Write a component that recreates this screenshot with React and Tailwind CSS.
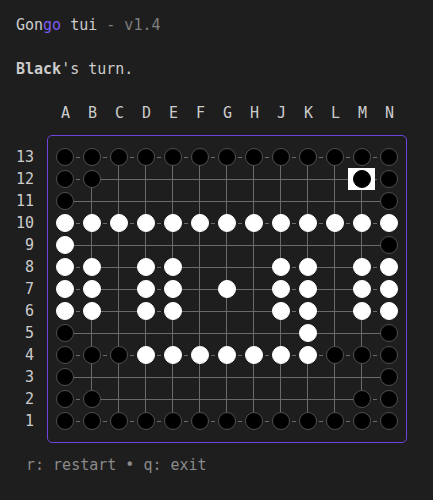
import React from "react";

// board rows from 13 (top) to 1 (bottom); B = black, W = white, . = empty
const board = [
  "BBBBBBBBBBBBB",
  "BB.........BB",
  "B...........B",
  "WWWWWWWWWWWWW",
  "W...........B",
  "WW.WW...WW.WW",
  "WW.WW.W.WW.WW",
  "WW.WW...WW.WW",
  "B........W..B",
  "BBBWWWWWWWBBB",
  "B...........B",
  "BB.........BB",
  "BBBBBBBBBBBBB",
];

const letters = ["A", "B", "C", "D", "E", "F", "G", "H", "J", "K", "L", "M", "N"];
const cursor = { r: 1, c: 11 };

const isStone = (v) => v === "B" || v === "W";

// one intersection: a 3x3 grid (arm / line / arm) with the stone on top
function Cell({ r, c }) {
  const v = board[r][c];
  const cur = r === cursor.r && c === cursor.c;
  const here = isStone(v);
  const left = c > 0 ? board[r][c - 1] : null;
  const right = c < 12 ? board[r][c + 1] : null;
  const up = r > 0 ? board[r - 1][c] : null;
  const down = r < 12 ? board[r + 1][c] : null;

  const leftDash = left !== null && here && isStone(left);
  const rightDash = right !== null && here && isStone(right);
  const upLine = up !== null && !(here && isStone(up));
  const downLine = down !== null && !(here && isStone(down));
  const leftLine = left !== null && !leftDash;
  const rightLine = right !== null && !rightDash;
  const center = upLine || downLine || leftLine || rightLine;

  return (
    <div
      className={`grid h-[22px] w-[27px] grid-cols-[13px_1px_13px] grid-rows-[11px_1px_10px] ${
        cur ? "bg-white" : ""
      }`}
    >
      {!cur && upLine && <span className="col-start-2 row-start-1 bg-[#6a6a6a]" />}
      {!cur && downLine && <span className="col-start-2 row-start-3 bg-[#6a6a6a]" />}
      {!cur && leftLine && <span className="col-start-1 row-start-2 bg-[#6a6a6a]" />}
      {!cur && leftDash && (
        <span className="col-start-1 row-start-2 w-[2px] justify-self-start bg-[#6a6a6a]" />
      )}
      {!cur && center && <span className="col-start-2 row-start-2 bg-[#6a6a6a]" />}
      {!cur && rightLine && <span className="col-start-3 row-start-2 bg-[#6a6a6a]" />}
      {!cur && rightDash && (
        <span className="col-start-3 row-start-2 w-[2px] justify-self-end bg-[#6a6a6a]" />
      )}
      {v === "B" && (
        <span
          className={`relative z-10 col-span-3 col-start-1 row-span-3 row-start-1 h-[18px] w-[18px] self-center justify-self-center rounded-full border bg-black ${
            cur ? "border-black" : "border-[#4f4f4f]"
          }`}
        />
      )}
      {v === "W" && (
        <span className="relative z-10 col-span-3 col-start-1 row-span-3 row-start-1 h-[18px] w-[18px] self-center justify-self-center rounded-full border border-white bg-white" />
      )}
    </div>
  );
}

export default function App() {
  return (
    <div className="min-h-screen bg-[#1e1e1e] pl-4 pt-[14px] font-['DejaVu_Sans_Mono',monospace] text-[15px] leading-[22px] text-[#cccccc]">
      {/* title */}
      <div className="whitespace-pre">
        Gon<span className="text-[#7c5cf2]">go</span> tui
        <span className="text-[#7f7f7f]"> - v1.4</span>
      </div>

      {/* status */}
      <div className="mt-[22px] whitespace-pre">
        <span className="font-bold">Black</span>'s turn.
      </div>

      {/* column letters */}
      <div className="ml-[36px] mt-[22px] flex">
        {letters.map((l) => (
          <div key={l} className="w-[27px] text-center">
            {l}
          </div>
        ))}
      </div>

      {/* board */}
      <div className="mt-[11px] flex">
        <div className="w-[18px] pt-[11px] text-right">
          {board.map((_, i) => (
            <div key={i} className="h-[22px]">
              {13 - i}
            </div>
          ))}
        </div>
        <div className="ml-[13px] rounded-[5px] border border-[#6c45e0] pb-[10px] pl-[3px] pr-[4px] pt-[10px]">
          {board.map((row, r) => (
            <div key={r} className="flex">
              {row.split("").map((_, c) => (
                <Cell key={c} r={r} c={c} />
              ))}
            </div>
          ))}
        </div>
      </div>

      {/* footer */}
      <div className="ml-[10px] mt-[11px] whitespace-pre text-[#8a8a8a]">
        r: restart • q: exit
      </div>
    </div>
  );
}
